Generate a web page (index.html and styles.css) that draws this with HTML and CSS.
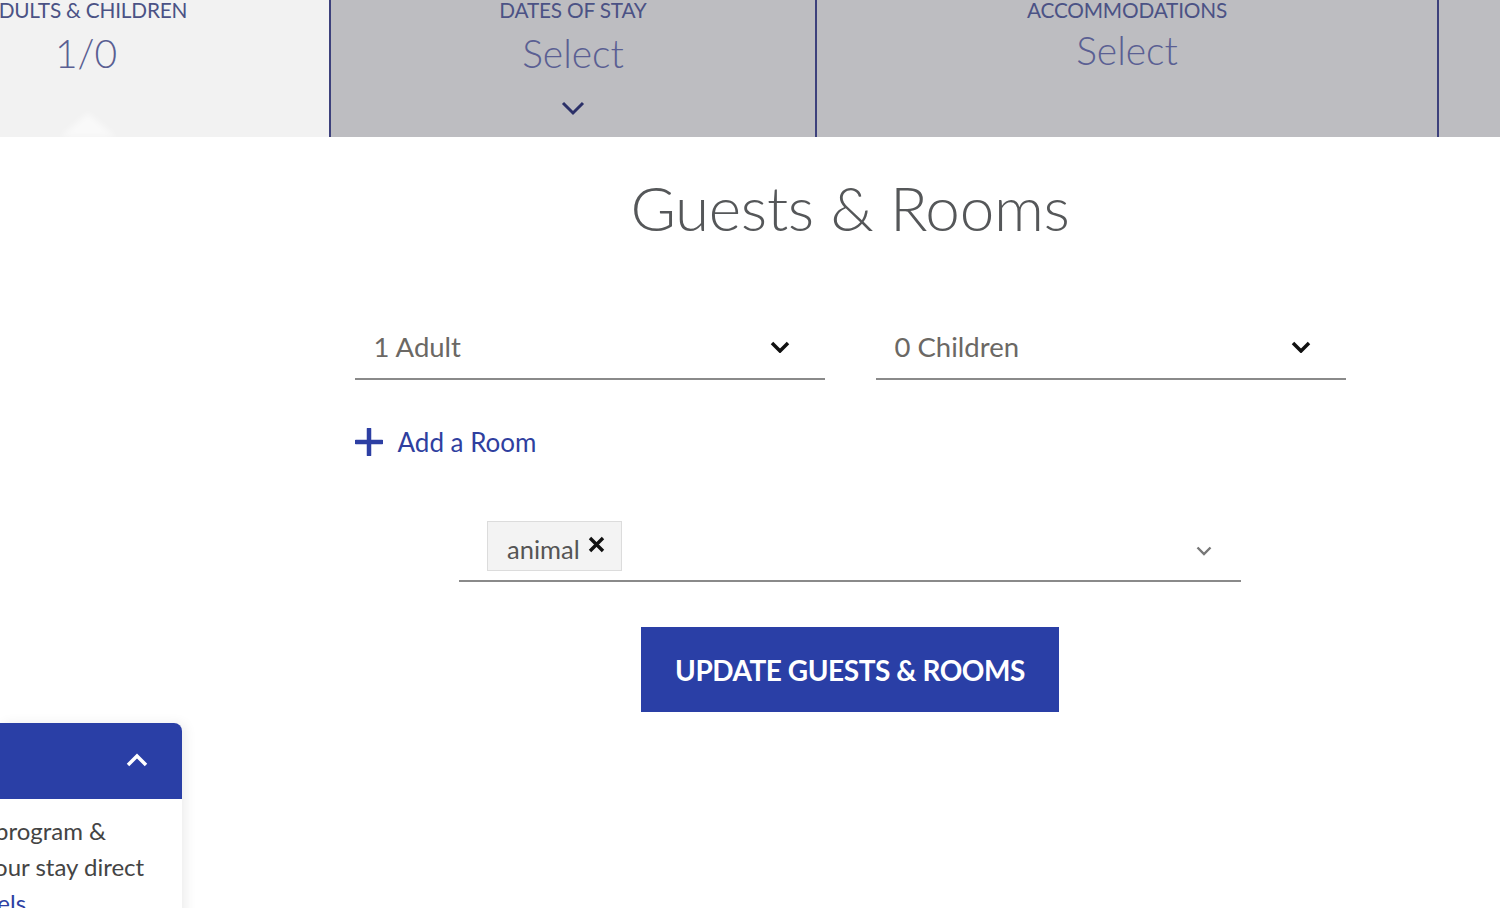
FILE: index.html
```html
<!DOCTYPE html>
<html lang="en">
<head>
<meta charset="utf-8">
<title>Guests &amp; Rooms</title>
<link rel="stylesheet" href="styles.css">
</head>
<body>
<header class="bar">
  <div class="cell cell-guests">
    <div class="label">Adults &amp; Children</div>
    <div class="value">1/0</div>
    <span class="pointer"></span>
  </div>
  <div class="cell cell-dates">
    <div class="label">Dates of Stay</div>
    <div class="value">Select</div>
    <svg class="cell-chev" width="24" height="16" viewBox="0 0 24 16"><path d="M2 3 L12 13 L22 3" fill="none" stroke="#2b3068" stroke-width="3"/></svg>
  </div>
  <div class="cell cell-acc">
    <div class="label">Accommodations</div>
    <div class="value value-acc">Select</div>
  </div>
  <div class="cell cell-rest"></div>
</header>

<main class="main">
  <h1 class="title">Guests &amp; Rooms</h1>

  <div class="room-row">
    <div class="select">
      <span class="select-text">1 Adult</span>
      <svg class="select-chev" width="20" height="12" viewBox="0 0 20 12"><path d="M2 2 L10 10 L18 2" fill="none" stroke="#111" stroke-width="3.5"/></svg>
    </div>
    <div class="select">
      <span class="select-text">0 Children</span>
      <svg class="select-chev" width="20" height="12" viewBox="0 0 20 12"><path d="M2 2 L10 10 L18 2" fill="none" stroke="#111" stroke-width="3.5"/></svg>
    </div>
  </div>

  <div class="add-room">
    <svg class="plus" width="28" height="28" viewBox="0 0 28 28"><path d="M14 1 V27 M1 14 H27" fill="none" stroke="#2d3fa3" stroke-width="4.5" stroke-linecap="round"/></svg>
    <span>Add a Room</span>
  </div>

  <div class="tag-select">
    <span class="tag">animal<svg class="tag-x" width="17" height="17" viewBox="0 0 17 17"><path d="M2 2 L15 15 M15 2 L2 15" fill="none" stroke="#111" stroke-width="3.4"/></svg></span>
    <svg class="tag-chev" width="16" height="10" viewBox="0 0 16 10"><path d="M1.5 1.5 L8 8 L14.5 1.5" fill="none" stroke="#777" stroke-width="2.4"/></svg>
  </div>

  <div class="actions">
    <button class="update-btn">UPDATE GUESTS &amp; ROOMS</button>
  </div>
</main>

<aside class="promo">
  <div class="promo-head">
    <svg width="22" height="14" viewBox="0 0 22 14"><path d="M2 12 L11 3 L20 12" fill="none" stroke="#fff" stroke-width="3.5"/></svg>
  </div>
  <div class="promo-body">
    <div class="pl pl1">program &amp;</div>
    <div class="pl pl2">your stay direct</div>
    <div class="pl pl3">hotels</div>
  </div>
</aside>
</body>
</html>
```

FILE: styles.css
```css
* { box-sizing: border-box; }

html, body {
  margin: 0;
  padding: 0;
  width: 1500px;
  height: 908px;
  overflow: hidden;
  background: #fff;
  font-family: Lato, "Liberation Sans", Arial, sans-serif;
  color: #555;
}

body { position: relative; }

/* ---------- top bar ---------- */
.bar {
  display: flex;
  height: 137px;
  background: #bdbdc1;
}

.cell {
  position: relative;
  display: flex;
  flex-direction: column;
  align-items: center;
  height: 137px;
  flex: none;
}

.cell-guests {
  width: 482px;
  margin-left: -153px;
  padding-right: 4px;
  background: #f2f2f2;
}

.cell-dates {
  width: 488px;
  border-left: 2px solid #3d417c;
  border-right: 2px solid #3d417c;
}

.cell-acc {
  width: 622px;
  border-right: 2px solid #3d417c;
}

.cell-rest { flex: 1; }

.label {
  margin-top: -2px;
  font-size: 20.8px;
  line-height: 24px;
  text-transform: uppercase;
  color: #4b5285;
  letter-spacing: -0.2px;
  white-space: nowrap;
}

.value {
  margin-top: 7px;
  font-size: 39px;
  line-height: 48px;
  font-weight: 300;
  color: #5a5f93;
}

.value-acc { margin-top: 4px; }

.cell-chev { margin-top: 23px; }

.pointer {
  position: absolute;
  left: 50%;
  bottom: 0;
  margin-left: -28px;
  width: 0;
  height: 0;
  border-left: 28px solid transparent;
  border-right: 28px solid transparent;
  border-bottom: 24px solid rgba(255, 255, 255, 0.55);
  filter: blur(3px);
}

/* ---------- main ---------- */
.main {
  padding-left: 200px;
  display: flex;
  flex-direction: column;
  align-items: center;
}

.title {
  margin: 33px 0 0;
  font-size: 62px;
  line-height: 74px;
  font-weight: 300;
  color: #555759;
  letter-spacing: -0.3px;
}

.room-row {
  margin-top: 75px;
  width: 991px;
  display: flex;
  gap: 51px;
}

.select {
  flex: 1;
  height: 61px;
  display: flex;
  align-items: center;
  justify-content: space-between;
  padding: 0 35px 4px 19px;
  border-bottom: 2px solid #8a8a8a;
}

.select-text {
  font-size: 27.5px;
  color: #6b6864;
}

.add-room {
  width: 991px;
  margin-top: 42px;
  height: 40px;
  display: flex;
  align-items: center;
  gap: 15px;
  font-size: 26px;
  color: #2f3f9f;
}

.tag-select {
  margin-top: 48px;
  width: 782px;
  display: flex;
  align-items: flex-start;
  justify-content: space-between;
  padding: 11px 29px 9px 28px;
  border-bottom: 2px solid #8a8a8a;
}

.tag {
  display: flex;
  align-items: flex-start;
  height: 50px;
  padding: 10px 16px 0 19px;
  background: #f3f3f3;
  border: 1px solid #dcdcdc;
  font-size: 25.5px;
  line-height: 34px;
  color: #555;
}

.tag-x { margin: 4px 0 0 8px; }

.tag-chev { margin-top: 25px; }

.actions { margin-top: 45px; }

.update-btn {
  width: 418px;
  height: 85px;
  border: none;
  background: #2a3fa6;
  color: #fff;
  font-family: Lato, "Liberation Sans", Arial, sans-serif;
  font-size: 28px;
  font-weight: 700;
  letter-spacing: -0.45px;
  cursor: pointer;
}

/* ---------- floating promo ---------- */
.promo {
  position: absolute;
  left: 0;
  top: 723px;
  width: 182px;
  height: 200px;
  background: #fff;
  border-top-right-radius: 8px;
  box-shadow: 4px 0 12px rgba(0, 0, 0, 0.07);
  overflow: hidden;
}

.promo-head {
  height: 76px;
  background: #2a3fa6;
  display: flex;
  align-items: center;
  justify-content: flex-end;
  padding: 0 34px 2px 0;
}

.promo-body {
  padding-top: 14px;
  font-size: 24px;
  line-height: 36px;
  color: #444;
}

.pl { white-space: nowrap; }
.pl1 { margin-left: -5px; }
.pl2 { margin-left: -18px; }
.pl3 { margin-left: -38px; color: #2d3fa3; }
```
